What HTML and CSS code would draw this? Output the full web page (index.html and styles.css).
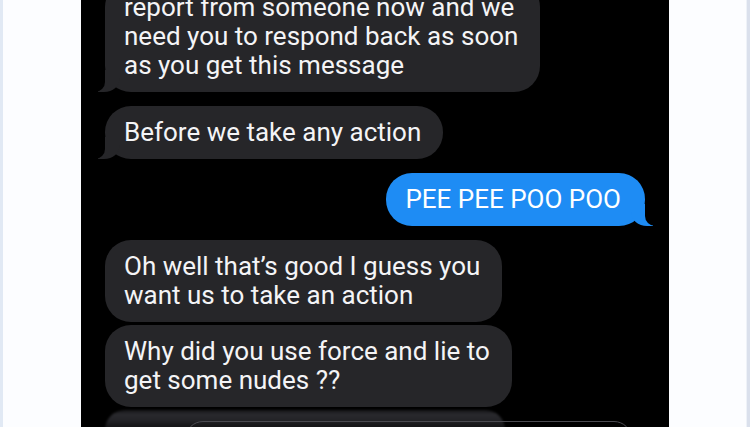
FILE: index.html
```html
<!DOCTYPE html>
<html lang="en">
<head>
<meta charset="utf-8">
<title>Messages</title>
<link rel="stylesheet" href="styles.css">
</head>
<body>
<div class="page">
  <div class="edge edge-left"></div>
  <div class="gutter"></div>
  <main class="chat">
    <div class="bubble them tail">report from someone now and we<br>need you to respond back as soon<br>as you get this message</div>
    <div class="bubble them tail">Before we take any action</div>
    <div class="bubble me tail">PEE PEE POO POO</div>
    <div class="bubble them">Oh well that’s good I guess you<br>want us to take an action</div>
    <div class="bubble them cont">Why did you use force and lie to<br>get some nudes ??</div>
    <div class="compose">
      <div class="compose-next"></div>
      <div class="compose-field"></div>
    </div>
  </main>
  <div class="gutter gutter-right"></div>
  <div class="edge edge-right"></div>
</div>
</body>
</html>
```

FILE: styles.css
```css
* { box-sizing: border-box; }

html, body {
  margin: 0;
  padding: 0;
  background: #fcfdff;
}

.page {
  display: grid;
  grid-template-columns: 3px 78px 588px 1fr 3px;
  height: 427px;
  overflow: hidden;
}

.edge-left { background: #e1e9f4; }
.edge-right { background: #dae0ec; }
.gutter { background: #fcfdff; }
.gutter-right { border-right: 1px solid #eef2f8; }

.chat {
  position: relative;
  background: #000;
  display: flex;
  flex-direction: column;
  justify-content: flex-end;
  padding: 0 24px;
  overflow: hidden;
  font-family: Roboto, "Liberation Sans", sans-serif;
  font-size: 26px;
  line-height: 29px;
  color: #f4f4f6;
}

.bubble {
  position: relative;
  flex: none;
  align-self: flex-start;
  padding: 12px 22px 12px 19px;
  border-radius: 26px;
  background: #262629;
  margin-top: 14px;
  white-space: nowrap;
}

.bubble.cont { margin-top: 3px; }

.bubble.me {
  align-self: flex-end;
  background: #1e8cf4;
  color: #fff;
  padding: 12px 24px 12px 19px;
}

/* message tails */
.bubble.tail::before,
.bubble.tail::after {
  content: "";
  position: absolute;
  bottom: 0;
  height: 22px;
}

.them.tail::before {
  left: -7px;
  width: 22px;
  background: #262629;
  border-bottom-right-radius: 16px 14px;
}

.them.tail::after {
  left: -12px;
  width: 12px;
  background: #000;
  border-bottom-right-radius: 10px;
}

.me.tail::before {
  right: -8px;
  width: 22px;
  background: #1e8cf4;
  border-bottom-left-radius: 16px 14px;
}

.me.tail::after {
  right: -13px;
  width: 13px;
  background: #000;
  border-bottom-left-radius: 10px;
}

/* blurred compose area at the bottom edge */
.compose {
  position: relative;
  flex: none;
  height: 17px;
  margin-top: 3px;
}

.compose-next {
  position: absolute;
  left: 0;
  top: 0;
  width: 400px;
  height: 30px;
  border-radius: 20px 20px 0 0;
  background: linear-gradient(#1b1b1e 0, #1b1b1e 2px, #2a2a2e 4px, #242428 10px, #151517 16px);
  filter: blur(0.8px);
}

.compose-field {
  position: absolute;
  left: 80px;
  top: 11px;
  width: 447px;
  height: 36px;
  border: 1.5px solid #4a4a50;
  border-radius: 18px;
  filter: blur(0.5px);
}
```
